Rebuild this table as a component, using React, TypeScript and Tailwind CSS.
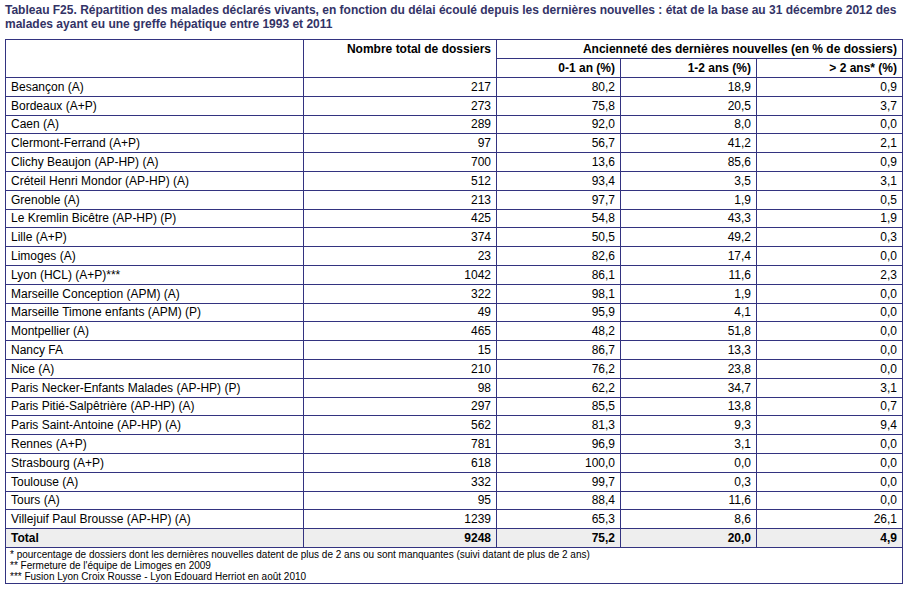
import React from "react";

const rows: [string, string, string, string, string][] = [
  ["Besançon (A)", "217", "80,2", "18,9", "0,9"],
  ["Bordeaux (A+P)", "273", "75,8", "20,5", "3,7"],
  ["Caen (A)", "289", "92,0", "8,0", "0,0"],
  ["Clermont-Ferrand (A+P)", "97", "56,7", "41,2", "2,1"],
  ["Clichy Beaujon (AP-HP) (A)", "700", "13,6", "85,6", "0,9"],
  ["Créteil Henri Mondor (AP-HP) (A)", "512", "93,4", "3,5", "3,1"],
  ["Grenoble (A)", "213", "97,7", "1,9", "0,5"],
  ["Le Kremlin Bicêtre (AP-HP) (P)", "425", "54,8", "43,3", "1,9"],
  ["Lille (A+P)", "374", "50,5", "49,2", "0,3"],
  ["Limoges (A)", "23", "82,6", "17,4", "0,0"],
  ["Lyon (HCL) (A+P)***", "1042", "86,1", "11,6", "2,3"],
  ["Marseille Conception (APM) (A)", "322", "98,1", "1,9", "0,0"],
  ["Marseille Timone enfants (APM) (P)", "49", "95,9", "4,1", "0,0"],
  ["Montpellier (A)", "465", "48,2", "51,8", "0,0"],
  ["Nancy FA", "15", "86,7", "13,3", "0,0"],
  ["Nice (A)", "210", "76,2", "23,8", "0,0"],
  ["Paris Necker-Enfants Malades (AP-HP) (P)", "98", "62,2", "34,7", "3,1"],
  ["Paris Pitié-Salpêtrière (AP-HP) (A)", "297", "85,5", "13,8", "0,7"],
  ["Paris Saint-Antoine (AP-HP) (A)", "562", "81,3", "9,3", "9,4"],
  ["Rennes (A+P)", "781", "96,9", "3,1", "0,0"],
  ["Strasbourg (A+P)", "618", "100,0", "0,0", "0,0"],
  ["Toulouse (A)", "332", "99,7", "0,3", "0,0"],
  ["Tours (A)", "95", "88,4", "11,6", "0,0"],
  ["Villejuif Paul Brousse (AP-HP) (A)", "1239", "65,3", "8,6", "26,1"],
];

const cell = "border border-[#333380] px-[5px] py-0 leading-[14px]";

export default function App() {
  return (
    <div
      className="bg-white text-black px-[5px] pt-[3px] w-[907px] h-[589px]"
      style={{ fontFamily: '"Liberation Sans", Arial, sans-serif' }}
    >
      <div className="text-[12px] leading-[14px] font-bold text-[#333366] w-[898px]">
        Tableau F25. Répartition des malades déclarés vivants, en fonction du délai écoulé depuis les dernières nouvelles : état de la base au 31 décembre 2012 des malades ayant eu une greffe hépatique entre 1993 et 2011
      </div>
      <table className="mt-[8px] border-collapse border border-[#333380] text-[12px] w-[897px] table-fixed">
        <colgroup>
          <col className="w-[298px]" />
          <col className="w-[193px]" />
          <col className="w-[124px]" />
          <col className="w-[136px]" />
          <col className="w-[146px]" />
        </colgroup>
        <tbody>
          <tr className="h-[19px]">
            <td rowSpan={2} className={cell}></td>
            <td rowSpan={2} className={`${cell} text-right font-bold align-top pt-[2px]`}>
              Nombre total de dossiers
            </td>
            <td colSpan={3} className={`${cell} text-right font-bold`}>
              Ancienneté des dernières nouvelles (en % de dossiers)
            </td>
          </tr>
          <tr className="h-[19px]">
            <td className={`${cell} text-right font-bold`}>0-1 an (%)</td>
            <td className={`${cell} text-right font-bold`}>1-2 ans (%)</td>
            <td className={`${cell} text-right font-bold`}>&gt; 2 ans* (%)</td>
          </tr>
          {rows.map((r) => (
            <tr key={r[0]} className="h-[18.8px]">
              <td className={cell}>{r[0]}</td>
              <td className={`${cell} text-right`}>{r[1]}</td>
              <td className={`${cell} text-right`}>{r[2]}</td>
              <td className={`${cell} text-right`}>{r[3]}</td>
              <td className={`${cell} text-right`}>{r[4]}</td>
            </tr>
          ))}
          <tr className="h-[19px] bg-[#eeeeee] font-bold">
            <td className={cell}>Total</td>
            <td className={`${cell} text-right`}>9248</td>
            <td className={`${cell} text-right`}>75,2</td>
            <td className={`${cell} text-right`}>20,0</td>
            <td className={`${cell} text-right`}>4,9</td>
          </tr>
          <tr>
            <td
              colSpan={5}
              className="border border-[#333380] px-[4px] pt-[1px] pb-[1px] text-[10px] leading-[11px] align-top"
            >
              <div>* pourcentage de dossiers dont les dernières nouvelles datent de plus de 2 ans ou sont manquantes (suivi datant de plus de 2 ans)</div>
              <div>** Fermeture de l'équipe de Limoges en 2009</div>
              <div>*** Fusion Lyon Croix Rousse - Lyon Edouard Herriot en août 2010</div>
            </td>
          </tr>
        </tbody>
      </table>
    </div>
  );
}
